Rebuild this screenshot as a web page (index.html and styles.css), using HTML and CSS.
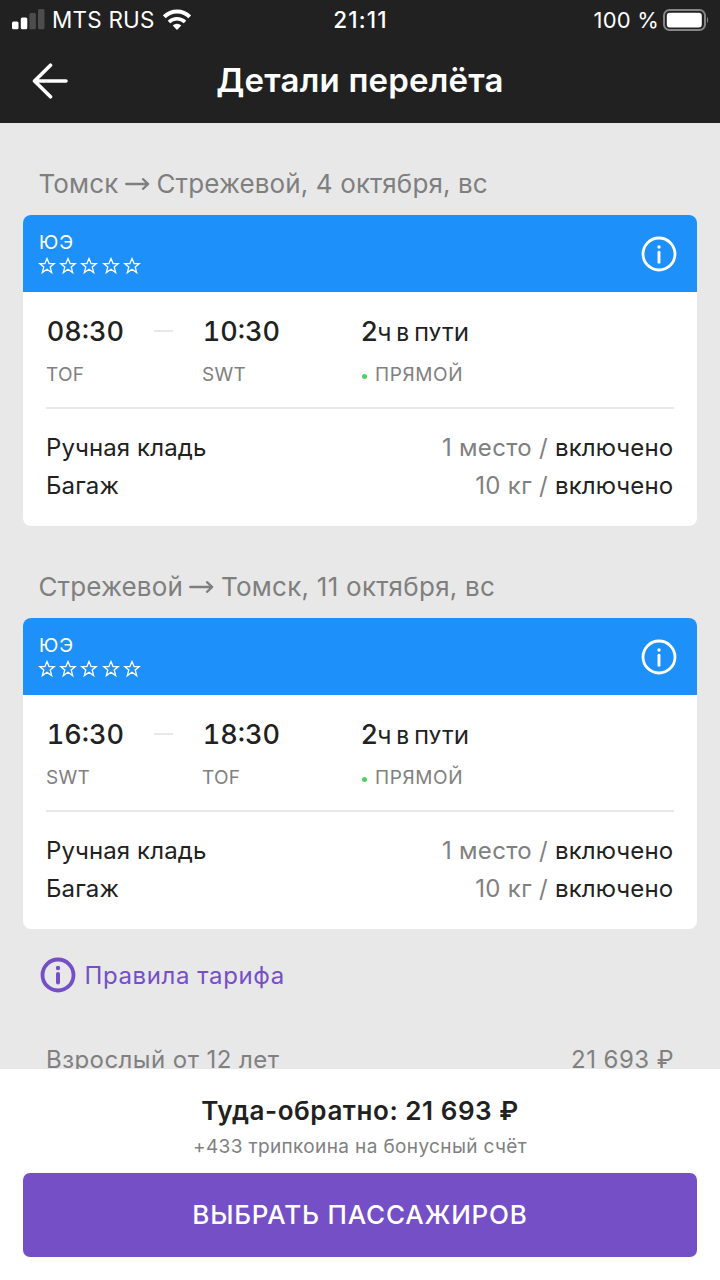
FILE: index.html
```html
<!DOCTYPE html>
<html lang="ru">
<head>
<meta charset="utf-8">
<title>Детали перелёта</title>
<link rel="stylesheet" href="styles.css">
</head>
<body>
<svg class="sprite" width="0" height="0" aria-hidden="true">
  <symbol id="star" viewBox="0 0 18 18"><path d="M9 1.600l2.100 5h5.200l-4.100 3.300 1.500 5.700L9 12.300l-4.700 3.300 1.500-5.700L1.700 6.600h5.200z" fill="none" stroke="currentColor" stroke-width="1.300"/></symbol>
  <symbol id="arrow" viewBox="0 0 25 14"><path d="M1.200 7h22M18 2.200L23.200 7 18 11.800" fill="none" stroke="currentColor" stroke-width="2.300" stroke-linecap="round" stroke-linejoin="round"/></symbol>
  <symbol id="info" viewBox="0 0 36 36"><circle cx="18" cy="18" r="16" fill="none" stroke="currentColor" stroke-width="2.800"/><circle cx="18" cy="11" r="1.700" fill="currentColor"/><path d="M18 16.300v9.900" stroke="currentColor" stroke-width="2.900" stroke-linecap="round"/></symbol>
</svg>
<div class="screen">
  <header class="header">
    <div class="status">
      <div class="carrier">
        <svg class="signal" viewBox="0 0 33 21"><rect x="0" y="12.500" width="6.500" height="7.800" rx="1.500" fill="#fff"/><rect x="8.800" y="8.500" width="6.500" height="11.800" rx="1.500" fill="#fff"/><rect x="17.400" y="4" width="6.500" height="16.300" rx="1.500" fill="#4d4d4d"/><rect x="26" y="0" width="6.500" height="20.300" rx="1.500" fill="#4d4d4d"/></svg>
        <span class="operator">MTS RUS</span>
        <svg class="wifi" viewBox="0 0 28 21"><path d="M1.300 7.800A18 18 0 0 1 26.700 7.800" fill="none" stroke="#fff" stroke-width="3.900"/><path d="M6 13A11.500 11.500 0 0 1 22 13" fill="none" stroke="#fff" stroke-width="3.600"/><path d="M14 21l-4.300-4.400a6.200 6.200 0 0 1 8.600 0z" fill="#fff"/></svg>
      </div>
      <span class="clock">21:11</span>
      <div class="power">
        <span class="percent">100 %</span>
        <svg class="battery" viewBox="0 0 46 22"><rect x="1" y="1" width="41" height="20" rx="5.500" fill="none" stroke="#858585" stroke-width="2"/><rect x="3.800" y="3.800" width="35" height="14.600" rx="3" fill="#fff"/><path d="M44 7.500q2.400 3.500 0 7z" fill="#858585"/></svg>
      </div>
    </div>
    <div class="nav">
      <svg class="back" viewBox="0 0 36 36"><path d="M34 18H3M18.500 2.200L2.500 18l16 15.800" fill="none" stroke="#fff" stroke-width="3.600" stroke-linecap="round" stroke-linejoin="round"/></svg>
      <h1 class="title">Детали перелёта</h1>
    </div>
  </header>
  <main class="content">
    <section class="leg">
      <h2 class="route"><span>Томск</span><svg class="arrow"><use href="#arrow"/></svg><span>Стрежевой, 4 октября, вс</span></h2>
      <article class="card">
        <div class="airline">
          <div>
            <div class="code">ЮЭ</div>
            <div class="stars"><svg><use href="#star"/></svg><svg><use href="#star"/></svg><svg><use href="#star"/></svg><svg><use href="#star"/></svg><svg><use href="#star"/></svg></div>
          </div>
          <svg class="info"><use href="#info"/></svg>
        </div>
        <div class="body">
          <div class="flight">
            <div class="point"><div class="time">08:30</div><div class="airport">TOF</div></div>
            <div class="dash"></div>
            <div class="point"><div class="time">10:30</div><div class="airport">SWT</div></div>
            <div class="trip"><div class="duration">2<small>Ч В ПУТИ</small></div><div class="airport direct">ПРЯМОЙ</div></div>
          </div>
          <div class="baggage">
            <div class="row"><span>Ручная кладь</span><span><i>1 место / </i>включено</span></div>
            <div class="row"><span>Багаж</span><span><i>10 кг / </i>включено</span></div>
          </div>
        </div>
      </article>
    </section>
    <section class="leg">
      <h2 class="route"><span>Стрежевой</span><svg class="arrow"><use href="#arrow"/></svg><span class="wide">Томск, 11 октября, вс</span></h2>
      <article class="card">
        <div class="airline">
          <div>
            <div class="code">ЮЭ</div>
            <div class="stars"><svg><use href="#star"/></svg><svg><use href="#star"/></svg><svg><use href="#star"/></svg><svg><use href="#star"/></svg><svg><use href="#star"/></svg></div>
          </div>
          <svg class="info"><use href="#info"/></svg>
        </div>
        <div class="body">
          <div class="flight">
            <div class="point"><div class="time">16:30</div><div class="airport">SWT</div></div>
            <div class="dash"></div>
            <div class="point"><div class="time">18:30</div><div class="airport">TOF</div></div>
            <div class="trip"><div class="duration">2<small>Ч В ПУТИ</small></div><div class="airport direct">ПРЯМОЙ</div></div>
          </div>
          <div class="baggage">
            <div class="row"><span>Ручная кладь</span><span><i>1 место / </i>включено</span></div>
            <div class="row"><span>Багаж</span><span><i>10 кг / </i>включено</span></div>
          </div>
        </div>
      </article>
    </section>
    <a class="rules"><svg viewBox="0 0 36 36"><circle cx="18" cy="18" r="15.500" fill="none" stroke="currentColor" stroke-width="3.800"/><circle cx="18" cy="11" r="2.200" fill="currentColor"/><path d="M18 17v8.500" stroke="currentColor" stroke-width="4" stroke-linecap="round"/></svg><span>Правила тарифа</span></a>
    <div class="price"><span>Взрослый от 12 лет</span><span>21 693 ₽</span></div>
  </main>
  <footer class="footer">
    <div class="total">Туда-обратно: 21 693 ₽</div>
    <div class="bonus">+433 трипкоина на бонусный счёт</div>
    <button class="submit">ВЫБРАТЬ ПАССАЖИРОВ</button>
  </footer>
</div>
</body>
</html>
```
FILE: styles.css
```css
* { box-sizing: border-box; margin: 0; padding: 0; }
body { font-family: Inter, "Liberation Sans", sans-serif; color: #212121; background: #e8e8e8; }
svg { display: block; flex: none; }
.sprite { display: none; }
.screen { width: 720px; height: 1280px; display: flex; flex-direction: column; overflow: hidden; }

.header { flex: none; height: 123px; background: #212121; color: #fff; }
.status { display: grid; grid-template-columns: 1fr auto 1fr; align-items: center; height: 40px; padding: 0 11px 0 12px; font-size: 22px; line-height: 40px; }
.carrier { display: flex; align-items: center; }
.signal { width: 33px; height: 21px; margin-top: -1px; }
.operator { margin-left: 7px; font-size: 22.5px; letter-spacing: .2px; }
.wifi { width: 28px; height: 21px; margin: -1px 0 0 8px; }
.clock { font-weight: 500; font-size: 22.5px; letter-spacing: 1.2px; }
.power { display: flex; align-items: center; justify-content: flex-end; }
.battery { width: 46px; height: 22px; margin: -1px 0 0 4px; }
.percent { letter-spacing: .2px; }
.nav { display: grid; grid-template-columns: 36px 1fr 36px; align-items: center; height: 81px; padding: 0 32px; }
.back { width: 36px; height: 36px; }
.title { padding-bottom: 2px; text-align: center; font-size: 33px; font-weight: 600; line-height: 40px; letter-spacing: .2px; }

.content { flex: 1; min-height: 0; padding: 0 23px; overflow: hidden; }
.leg { height: 403px; padding-top: 41px; }
.route { display: flex; align-items: center; height: 39px; padding-left: 15.5px; font-size: 26px; font-weight: 400; letter-spacing: .12px; color: #7f7f7f; white-space: nowrap; }
.route .wide { letter-spacing: .26px; }
.arrow { width: 25px; height: 14px; margin: 0 6.5px; }
.card { margin-top: 12px; height: 311px; border-radius: 8px; background: #fff; overflow: hidden; }
.airline { display: flex; justify-content: space-between; height: 77px; padding: 17px 20.5px 0 15px; background: #1e90f9; color: #fff; }
.code { padding: 1px 0 0 1px; font-size: 19px; line-height: 20px; letter-spacing: 1px; }
.stars { display: flex; gap: 3.2px; margin-top: 4px; }
.stars svg { width: 18px; height: 18px; }
.info { width: 36px; height: 36px; margin-top: 3.5px; }
.body { padding: 0 23px; }
.flight { display: grid; grid-template-columns: 108px 48px 159px 1fr; height: 117px; padding-top: 23px; border-bottom: 2px solid #e8e8e8; }
.time, .duration { height: 34px; font-size: 27px; line-height: 34px; font-weight: 500; white-space: nowrap; }
.time { padding-left: .7px; font-variant-numeric: tabular-nums; }
.dash { width: 19px; height: 2px; margin-top: 15px; background: #e8e8e8; }
.duration small { font-size: 19px; line-height: 1; font-weight: 450; letter-spacing: .2px; }
.airport { margin-top: 15px; font-size: 19px; line-height: 22px; letter-spacing: .3px; color: #808080; }
.direct { display: flex; align-items: center; letter-spacing: .6px; }
.direct::before { content: ""; width: 5px; height: 5px; margin: 3px 8px 0 1px; border-radius: 50%; background: #4cd264; }
.baggage { padding-top: 20px; }
.row, .price { display: flex; justify-content: space-between; font-size: 24px; line-height: 38px; letter-spacing: .12px; white-space: pre; }
.row { padding-right: .8px; }
.row i { font-style: normal; letter-spacing: .3px; color: #808080; }

.rules { display: flex; align-items: center; height: 36px; margin-top: 28px; padding-left: 16.5px; font-size: 24px; letter-spacing: .6px; color: #744fc6; }
.rules svg { width: 36px; height: 36px; margin-right: 9px; }
.price { margin-top: 48px; padding: 0 23px; letter-spacing: .45px; color: #808080; }

.footer { flex: none; height: 211px; padding: 22px 23px 0; background: #fff; text-align: center; }
.total { font-size: 26px; line-height: 40px; font-weight: 600; letter-spacing: .55px; }
.bonus { padding-top: 1px; font-size: 19px; line-height: 30px; letter-spacing: .37px; color: #808080; }
.submit { display: block; width: 100%; height: 84px; margin-top: 11px; border: 0; border-radius: 7px; background: #744fc6; color: #fff; font: 500 26px/84px Inter, "Liberation Sans", sans-serif; letter-spacing: .8px; }
```
